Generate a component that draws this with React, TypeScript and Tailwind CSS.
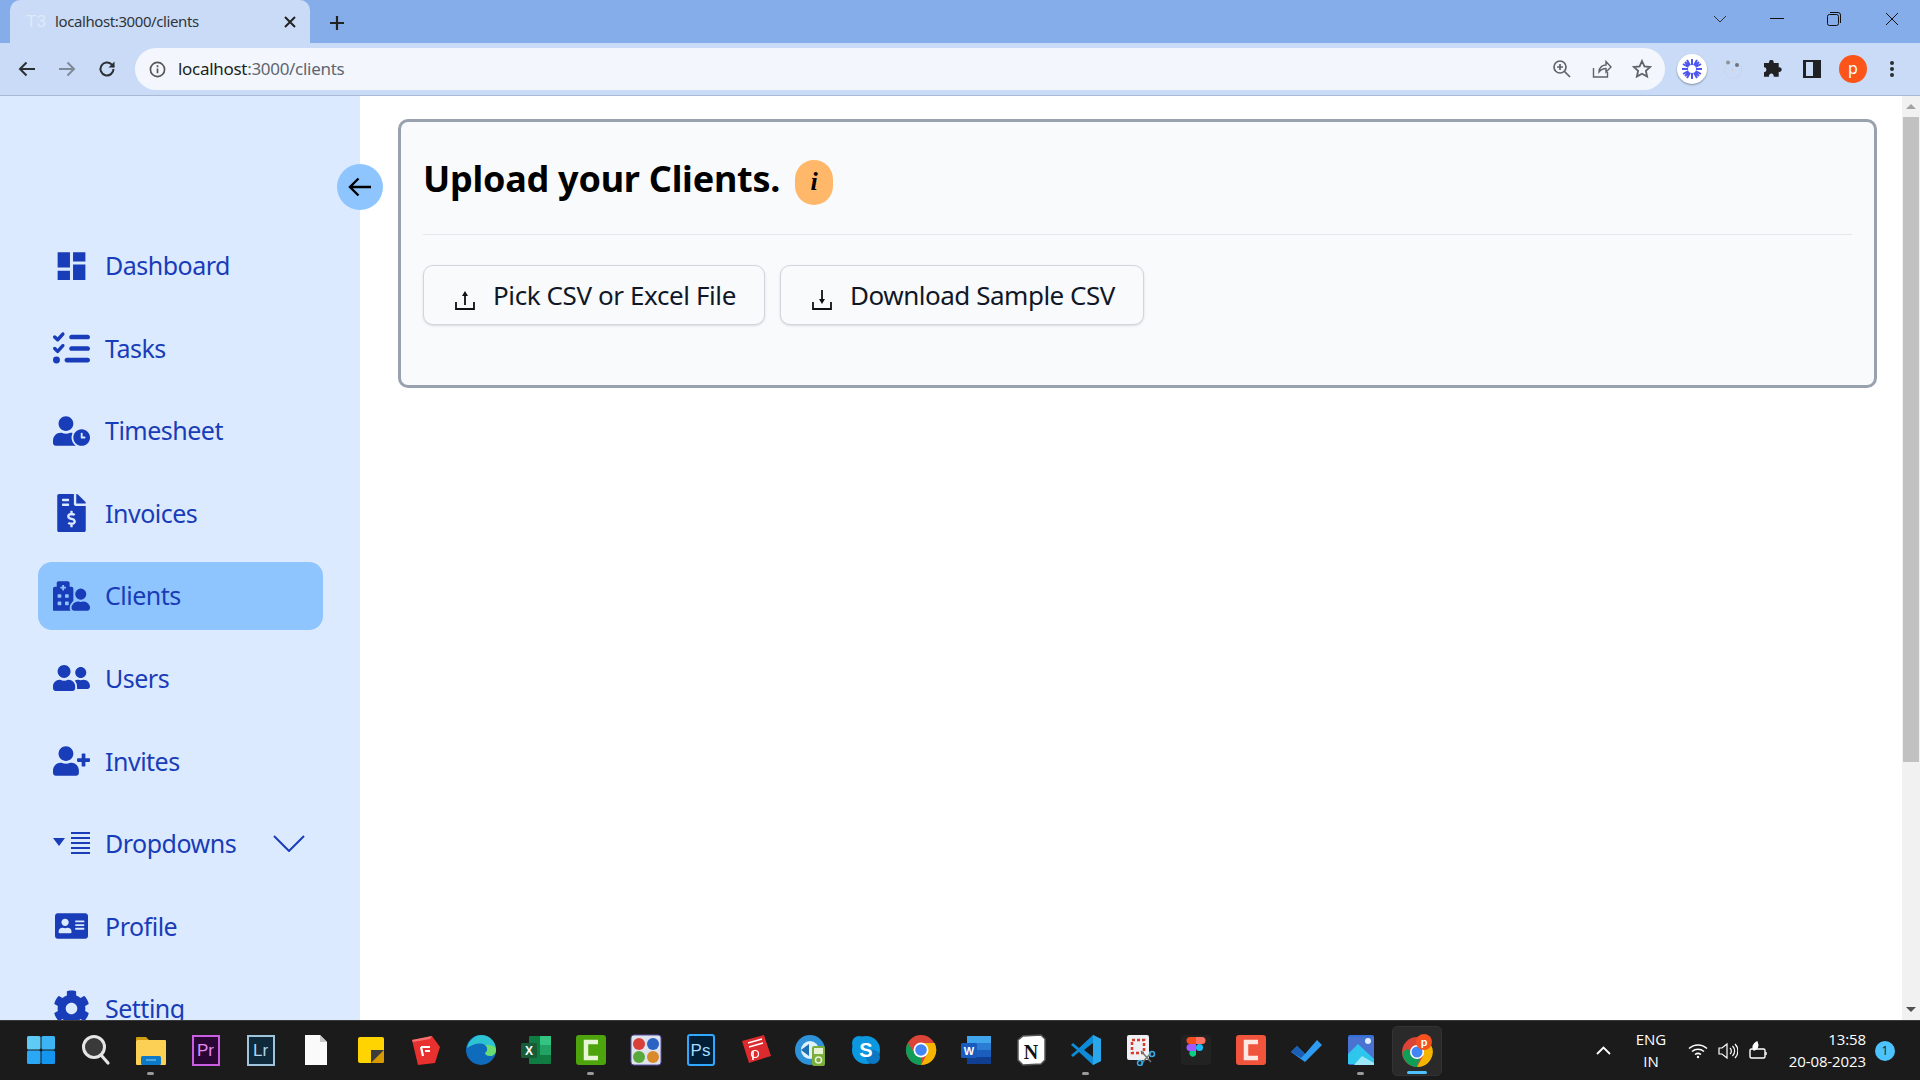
import React from "react";
import { FaListCheck } from "react-icons/fa6";
import { FaUserClock, FaFileInvoiceDollar, FaHospitalUser, FaUserFriends, FaUserPlus, FaAddressCard, FaCog } from "react-icons/fa";
import { MdDashboard } from "react-icons/md";

const Dd = () => (
  <svg viewBox="0 0 37 24" className="w-[37px] h-[24px]" fill="currentColor">
    <path d="M0 6h12L6 14z" />
    <path d="M18 0h19v2H18zM18 5h19v2H18zM18 10h19v2H18zM18 15h19v2H18zM18 20h19v2H18z" />
  </svg>
);

const nav: [string, React.ReactNode][] = [
  ["Dashboard", <MdDashboard className="w-[38px] h-[38px]" />],
  ["Tasks", <FaListCheck className="w-[37px] h-[37px]" />],
  ["Timesheet", <FaUserClock className="w-[37px] h-[30px]" />],
  ["Invoices", <FaFileInvoiceDollar className="w-[37px] h-[38px]" />],
  ["Clients", <FaHospitalUser className="w-[37px] h-[30px]" />],
  ["Users", <FaUserFriends className="w-[37px] h-[30px]" />],
  ["Invites", <FaUserPlus className="w-[37px] h-[30px]" />],
  ["Dropdowns", <Dd />],
  ["Profile", <FaAddressCard className="w-[33px] h-[30px]" />],
  ["Setting", <FaCog className="w-[37px] h-[37px]" />],
];

const S = ({ children, w = 32, h = 32 }: { children: React.ReactNode; w?: number; h?: number }) => (
  <svg width={w} height={h} viewBox="0 0 32 32">{children}</svg>
);

const apps: React.ReactNode[] = [
  <S><rect x="2" y="2" width="13.5" height="13.5" rx="1.5" fill="#5ecbf7" /><rect x="16.5" y="2" width="13.5" height="13.5" rx="1.5" fill="#3db5f5" /><rect x="2" y="16.5" width="13.5" height="13.5" rx="1.5" fill="#2ba8f5" /><rect x="16.5" y="16.5" width="13.5" height="13.5" rx="1.5" fill="#1496f0" /></S>,
  <S><circle cx="14" cy="13" r="10.5" fill="#3a3a3a" stroke="#e6e6e6" strokeWidth="3" /><path d="M21 21l7 8" stroke="#e6e6e6" strokeWidth="3.2" strokeLinecap="round" /></S>,
  <S><path d="M1 4a1 1 0 0 1 1-1h9l3 3h-13z" fill="#d09e10" /><rect x="1" y="6" width="30" height="25" rx="1" fill="#fcd055" /><rect x="6" y="22" width="20" height="9" rx="1.5" fill="#0c78c8" /><path d="M11 26h10" stroke="#7cc4ef" strokeWidth="1.2" /></S>,
  <div className="w-[28px] h-[31px] bg-[#2a0634] border-2 border-[#c95fe0] flex items-center justify-center text-[#e08cf2] text-[17px] leading-none font-['Liberation_Sans',sans-serif]">Pr</div>,
  <div className="w-[28px] h-[31px] bg-[#0f2a3a] border-2 border-[#9fc4dc] flex items-center justify-center text-[#b5d4e8] text-[17px] leading-none font-['Liberation_Sans',sans-serif]">Lr</div>,
  <S><path d="M5 1h15l7 7v23H5z" fill="#fafafa" /><path d="M20 1v7h7z" fill="#c8c8c8" /></S>,
  <S><rect x="3" y="3" width="26" height="26" rx="2" fill="#ffd400" /><path d="M16 29l13-13v11a2 2 0 0 1-2 2z" fill="#d99a00" /><path d="M16 29V16h13z" fill="#3c3c3c" /></S>,
  <S><path d="M2 6l20-4 8 11-5 16-17 2z" fill="#e8302e" /><path d="M2 6l20-4-2 3-17 3z" fill="#f67272" /><path d="M11 13h9M11 13l2 9M15 17h5" stroke="#fff" strokeWidth="2.2" fill="none" /></S>,
  <S><circle cx="16" cy="16" r="15" fill="#0f6cbd" /><path d="M2 14C4 5 11 1 16 1c8 0 15 6 15 15 0 3-2 6-6 6-3 0-5-1-5-3 3-1 3-6 0-8-5-3-12-1-18 3z" fill="#2ec3d3" /><path d="M31 16c0 2-1 5-5 6-3 0-5-1-6-3 3-2 3-6 0-8 4 0 11 0 11 5z" fill="#6bdc6e" /></S>,
  <S><rect x="9" y="2" width="22" height="28" rx="1" fill="#107c41" /><rect x="20" y="2" width="11" height="9" fill="#33c481" /><rect x="20" y="11" width="11" height="10" fill="#21a366" /><rect x="1" y="9" width="16" height="15" rx="1.5" fill="#185c37" /><text x="9" y="21" textAnchor="middle" fontSize="12" fontWeight="700" fill="#fff" fontFamily="Liberation Sans">X</text></S>,
  <S><rect x="1" y="1" width="30" height="30" rx="3" fill="#4da40d" /><path d="M23 8H11v16h12" fill="none" stroke="#e8f6d8" strokeWidth="4.5" /></S>,
  <S><rect x="1" y="1" width="30" height="30" rx="3" fill="#dfe3ee" stroke="#5a52a8" /><circle cx="9" cy="10" r="6" fill="#d8413a" /><circle cx="23" cy="10" r="6" fill="#2b63c4" /><circle cx="9" cy="23" r="6" fill="#59a83b" /><circle cx="23" cy="23" r="6" fill="#d98a2b" /></S>,
  <div className="w-[28px] h-[32px] bg-[#001e36] border-2 border-[#31a8ff] rounded-[3px] flex items-center justify-center text-[17px] leading-none font-['Liberation_Sans',sans-serif]"><span className="text-[#a5dcff]">Ps</span></div>,
  <S><path d="M2 7l22-6 7 21-22 7z" fill="#dc2a2e" /><path d="M8 9l14-4M9 13l14-4M13 17v9" stroke="#fff" strokeWidth="1.6" /><circle cx="15" cy="20" r="3.5" fill="none" stroke="#fff" strokeWidth="1.2" /></S>,
  <S><circle cx="15" cy="16" r="15" fill="#2e92d8" /><circle cx="15" cy="16" r="9" fill="#dff1fb" /><path d="M6 16l8-6v12z" fill="#1d6fb0" /><rect x="17" y="12" width="13" height="20" rx="2" fill="#7cae3e" /><rect x="19" y="14" width="9" height="6" fill="#e8f2d4" /><circle cx="23.5" cy="26" r="3" fill="none" stroke="#e8f2d4" strokeWidth="1.5" /></S>,
  <S><circle cx="16" cy="16" r="14" fill="#0b98e0" /><circle cx="9" cy="9" r="7" fill="#0b98e0" /><circle cx="23" cy="23" r="7" fill="#0b78c4" /><text x="16" y="23" textAnchor="middle" fontSize="20" fontWeight="700" fill="#fff" fontFamily="Liberation Sans">S</text></S>,
  <S><circle cx="16" cy="16" r="15" fill="#db4437" /><path d="M16 16L3 23.5A15 15 0 0 0 16 31z" fill="#0f9d58" /><path d="M3 23.5A15 15 0 0 1 2.9 8.7L10 20z" fill="#0f9d58" /><path d="M16 9h13.6A15 15 0 0 1 16 31l6-11z" fill="#f4b400" /><circle cx="16" cy="16" r="7.5" fill="#fff" /><circle cx="16" cy="16" r="5.8" fill="#4285f4" /></S>,
  <S><rect x="7" y="2" width="24" height="28" rx="1" fill="#1b5ebe" /><rect x="7" y="2" width="24" height="7" fill="#41a5ee" /><rect x="7" y="9" width="24" height="7" fill="#2b7cd3" /><rect x="7" y="23" width="24" height="7" fill="#103f91" /><rect x="1" y="9" width="16" height="15" rx="1.5" fill="#185abd" /><text x="9" y="21" textAnchor="middle" fontSize="11" fontWeight="700" fill="#fff" fontFamily="Liberation Sans">W</text></S>,
  <S><path d="M3 6l5-4 18-1 4 4v21l-4 4-18 1-5-5z" fill="#fff" stroke="#555" strokeWidth="1.5" /><text x="16" y="25" textAnchor="middle" fontSize="20" fontWeight="700" fill="#111" fontFamily="Liberation Serif">N</text></S>,
  <S><path d="M23 1l8 4v22l-8 4L9 18l-6 5-2-2 6-5-6-5 2-2 6 5z" fill="#0e8bd6" /><path d="M23 9v14l-9-7z" fill="#1a1a1a" /><path d="M23 1l8 4v22l-8 4z" fill="#2aa6ea" /></S>,
  <S><rect x="2" y="1" width="22" height="25" rx="2" fill="#eef0f3" /><path d="M7 6h12v13H7z" fill="none" stroke="#d83b2d" strokeWidth="2.5" strokeDasharray="3 2" /><path d="M16 17l10 11M26 19L16 30" stroke="#777" strokeWidth="1.5" /><circle cx="27" cy="20" r="2.5" fill="none" stroke="#3ba9e6" strokeWidth="1.5" /><circle cx="15" cy="29" r="2.5" fill="none" stroke="#3ba9e6" strokeWidth="1.5" /></S>,
  <S><rect x="1" y="1" width="30" height="30" rx="3" fill="#222" /><path d="M10 3h6v7h-6a3.5 3.5 0 0 1 0-7z" fill="#f24e1e" /><path d="M16 3h6a3.5 3.5 0 0 1 0 7h-6z" fill="#ff7262" /><path d="M10 10h6v7h-6a3.5 3.5 0 0 1 0-7z" fill="#a259ff" /><circle cx="19.5" cy="13.5" r="3.5" fill="#1abcfe" /><path d="M10 17h6v3.5a3.5 3.5 0 1 1-6-3.5z" fill="#0acf83" /></S>,
  <S><rect x="1" y="1" width="30" height="30" rx="3" fill="#f1543c" /><path d="M23 8H11v16h12" fill="none" stroke="#fde8e3" strokeWidth="4.5" /></S>,
  <S><path d="M1 18l6-6 8 8L27 6l5 5-17 17z" fill="#2f9bf0" /><path d="M1 18l6-6 8 8-4 4z" fill="#1a5fb4" /></S>,
  <S><rect x="3" y="1" width="26" height="30" rx="2" fill="#3270d8" /><path d="M3 3h26v27H3z" fill="#4a72d0" /><path d="M3 30V20l10-10 16 15v5z" fill="#2ec6ec" /><path d="M9 31l8-9 12 7v2z" fill="#9be8f7" /><circle cx="23" cy="7" r="3" fill="#dfeeff" /></S>,
];

export default function App() {
  return (
    <div className="h-screen w-full flex flex-col overflow-hidden bg-white font-['Noto_Sans',sans-serif]">
      {/* tab strip */}
      <div className="h-[43px] bg-[#84ade9] flex items-end shrink-0 pl-[10px] relative">
        <div className="w-[300px] h-[43px] bg-[#c9dbf6] rounded-t-[10px] flex items-center pl-[16px] pr-[13px] text-[15px] text-[#30343a]">
          <span className="w-[29px] text-[#dfe9f8] text-[17px] font-['Liberation_Sans',sans-serif]">T3</span>
          <span className="flex-1 tracking-[-0.4px]">localhost:3000/clients</span>
          <svg width="14" height="14" viewBox="0 0 14 14" stroke="#222" strokeWidth="2"><path d="M2 2l10 10M12 2L2 12" /></svg>
        </div>
        <svg className="ml-[19px] mb-[12px]" width="16" height="16" viewBox="0 0 16 16" stroke="#222" strokeWidth="2.2"><path d="M8 1v14M1 8h14" /></svg>
        <div className="flex-1" />
        <div className="flex items-center h-[43px] pb-[6px]">
          <svg className="mr-[43px]" width="14" height="8" viewBox="0 0 14 8" fill="none" stroke="#333" strokeWidth="1"><path d="M1 1l6 6 6-6" /></svg>
          <div className="w-[14px] h-px bg-[#111] mr-[43px]" />
          <svg className="mr-[44px]" width="14" height="14" viewBox="0 0 14 14" fill="none" stroke="#111" strokeWidth="1"><rect x="0.5" y="2.5" width="11" height="11" rx="2" /><path d="M3 .5h8a2.5 2.5 0 0 1 2.5 2.5v8" /></svg>
          <svg className="mr-[21px]" width="14" height="14" viewBox="0 0 14 14" stroke="#111" strokeWidth="1"><path d="M1 1l12 12M13 1L1 13" /></svg>
        </div>
      </div>
      {/* toolbar */}
      <div className="h-[53px] bg-[#c9dbf6] border-b border-[#a8b9d6] flex items-start shrink-0 pt-[5px]">
        <div className="w-[135px] h-[42px] flex items-center pl-[18px] gap-[22px] shrink-0">
          <svg width="18" height="16" viewBox="0 0 18 16" fill="none" stroke="#2b2f33" strokeWidth="2"><path d="M17 8H2M8.5 1.5L2 8l6.5 6.5" /></svg>
          <svg width="18" height="16" viewBox="0 0 18 16" fill="none" stroke="#7f8a99" strokeWidth="2"><path d="M1 8h15M9.5 1.5L16 8l-6.5 6.5" /></svg>
          <svg width="18" height="18" viewBox="0 0 18 18" fill="none" stroke="#2b2f33" strokeWidth="2"><path d="M15.5 9A6.5 6.5 0 1 1 13.6 4.4L16 7" /><path d="M16.5 1.5V7.5H10.5" fill="#2b2f33" stroke="none" /></svg>
        </div>
        <div className="w-[1530px] h-[42px] rounded-full bg-[#f3f7fd] flex items-center pl-[14px] pr-[13px] shrink-0">
          <svg width="17" height="17" viewBox="0 0 18 18" fill="none" stroke="#555" strokeWidth="1.8"><circle cx="9" cy="9" r="7.5" /><path d="M9 8v5M9 4.5v2" /></svg>
          <span className="ml-[12px] text-[17px] text-[#5f6670] tracking-[-0.3px]"><span className="text-[#1c1f22]">localhost</span>:3000/clients</span>
          <div className="flex-1" />
          <svg width="20" height="20" viewBox="0 0 20 20" fill="none" stroke="#5f6368" strokeWidth="1.7"><circle cx="8" cy="8" r="6" /><path d="M12.5 12.5L18 18M5 8h6M8 5v6" /></svg>
          <svg className="mx-[20px]" width="20" height="20" viewBox="0 0 20 20" fill="none" stroke="#5f6368" strokeWidth="1.4"><path d="M1.5 9v9h14v-5M7 13c0-5 4-7 7-7V2.5l5 5.5-5 5V9.500c-3 0-5 1-7 3.500z" /></svg>
          <svg width="20" height="20" viewBox="0 0 20 20" fill="none" stroke="#5f6368" strokeWidth="1.8"><path d="M10 2l2.400 5.400 5.800.6-4.300 3.900 1.200 5.700L10 14.700l-5.100 2.900 1.200-5.700L1.800 8l5.800-.6z" /></svg>
        </div>
        <div className="flex items-center h-[42px] pl-[12px]">
          <div className="w-[30px] h-[30px] rounded-full bg-white shadow-[0_1px_2px_rgba(0,0,0,0.35)] flex items-center justify-center mr-[16px]">
            <svg width="22" height="22" viewBox="0 0 22 22" stroke="#4f56f0" strokeWidth="2"><path d="M11 1v20M1 11h20M4 4l14 14M18 4L4 18M6 2l10 18M16 2L6 20M2 6l18 10M20 6L2 16" /><circle cx="11" cy="11" r="4" fill="#fff" stroke="none" /></svg>
          </div>
          <svg className="mr-[20px]" width="20" height="20" viewBox="0 0 20 20"><circle cx="10" cy="11" r="8.500" fill="none" stroke="#c5cfdc" strokeWidth="1" strokeDasharray="1.500 1.500" /><circle cx="5" cy="3.500" r="2" fill="#8e949c" /><circle cx="14" cy="6" r="2" fill="#6f757d" /><circle cx="9.500" cy="11" r="1" fill="#e0c9a0" /></svg>
          <svg className="mr-[21px]" width="19" height="18" viewBox="0 0 19 18" fill="#202124"><path d="M0 4h5.200a2.400 2.400 0 1 1 4.600 0H15v4.500a2.400 2.400 0 1 1 0 4.600V18H9.800a2.400 2.400 0 1 0-4.600 0H0v-4.500a2.400 2.400 0 1 0 0-5z" transform="translate(1 -1) scale(0.98)" /></svg>
          <div className="w-[18px] h-[18px] border-[2.500px] border-[#202124] border-l-[3px] border-r-[8px] mr-[18px]" />
          <div className="w-[28px] h-[28px] rounded-full bg-[#fc5419] text-white flex items-center justify-center text-[16px] leading-none pb-[2px] mr-[22px]">p</div>
          <svg width="6" height="18" viewBox="0 0 6 18" fill="#2a2d30"><circle cx="3" cy="3" r="2" /><circle cx="3" cy="9" r="2" /><circle cx="3" cy="15" r="2" /></svg>
        </div>
      </div>

      {/* page */}
      <div className="flex-1 min-h-0 flex relative overflow-hidden">
        <aside className="w-[360px] shrink-0 bg-blue-100 pl-[38px] pr-[37px] pt-[135.500px] flex flex-col gap-[14.600px] overflow-hidden">
          {nav.map(([label, icon]) => (
            <div key={label} className={`h-[68px] shrink-0 rounded-[14px] pl-[15px] pr-[18px] flex items-center text-blue-800 ${label === "Clients" ? "bg-blue-300" : ""}`}>
              <span className="w-[37px] flex items-center justify-center shrink-0">{icon}</span>
              <span className="ml-[15px] text-[25px] tracking-[-0.5px] leading-none flex-1">{label}</span>
              {label === "Dropdowns" && (
                <svg width="32" height="17" viewBox="0 0 32 17" fill="none" stroke="currentColor" strokeWidth="2"><path d="M1 1l15 15L31 1" /></svg>
              )}
            </div>
          ))}
        </aside>
        <div className="absolute left-[337px] top-[68px] w-[46px] h-[46px] rounded-full bg-blue-300 flex items-center justify-center">
          <svg width="24" height="20" viewBox="0 0 24 20" fill="none" stroke="#000" strokeWidth="2.400"><path d="M23 10H2M10.500 1.500L2 10l8.500 8.500" /></svg>
        </div>
        <main className="flex-1 min-w-0 pl-[38px] pr-[25px] pt-[23px]">
          <section className="h-[269px] rounded-[10px] border-[3px] border-gray-400 bg-gray-50 px-[22px]">
            <div className="h-[113px] border-b border-gray-200 flex items-center">
              <h1 className="text-[36px] tracking-[-0.25px] font-bold text-black leading-none mt-[2px]">Upload your Clients.</h1>
              <div className="ml-[15px] mt-[8px] w-[38px] h-[45px] rounded-full bg-orange-300 flex items-center justify-center italic font-bold text-[26px] leading-none text-black font-['Liberation_Serif',serif]">i</div>
            </div>
            <div className="flex gap-[15px] mt-[30px]">
              <button className="h-[60px] w-[342px] rounded-[10px] border border-gray-300 shadow-sm bg-gray-50 flex items-center pl-[30px] text-[26px] tracking-[-0.4px] text-gray-900">
                <svg className="mt-[8px]" width="22" height="22" viewBox="0 0 22 22" fill="none" stroke="#111" strokeWidth="1.800"><path d="M2 14v7h18v-7M11 17V6" /><path d="M8 8l3-5 3 5z" fill="#111" stroke="none" /></svg>
                <span className="ml-[17px]">Pick CSV or Excel File</span>
              </button>
              <button className="h-[60px] w-[364px] rounded-[10px] border border-gray-300 shadow-sm bg-gray-50 flex items-center pl-[30px] text-[26px] tracking-[-0.48px] text-gray-900">
                <svg className="mt-[8px]" width="22" height="22" viewBox="0 0 22 22" fill="none" stroke="#111" strokeWidth="1.800"><path d="M2 14v7h18v-7M11 2v10" /><path d="M8 11l3 5 3-5z" fill="#111" stroke="none" /></svg>
                <span className="ml-[17px]">Download Sample CSV</span>
              </button>
            </div>
          </section>
        </main>
        <div className="w-[18px] shrink-0 bg-[#f1f1f1] flex flex-col items-center">
          <div className="h-[21px] flex items-center"><div className="w-0 h-0 border-x-[5px] border-x-transparent border-b-[5px] border-b-[#a3a3a3]" /></div>
          <div className="w-[16px] h-[645px] bg-[#c1c1c1]" />
          <div className="flex-1" />
          <div className="h-[21px] flex items-center"><div className="w-0 h-0 border-x-[5px] border-x-transparent border-t-[5px] border-t-[#505050]" /></div>
        </div>
      </div>

      {/* taskbar */}
      <footer className="h-[60px] shrink-0 bg-[#1b1b1b] border-t border-[#3a3a3a] flex items-center pl-[13px] text-white">
        {apps.map((a, i) => (
          <div key={i} className="w-[55px] h-[50px] flex items-center justify-center relative pb-[1px]">
            {a}
            {[2, 10, 19, 24].includes(i) && <div className="absolute bottom-[1px] left-[24px] w-[7px] h-[3px] rounded-full bg-[#9a9a9a]" />}
          </div>
        ))}
        <div className="w-[50px] h-[50px] rounded-[5px] bg-[#2a2a2a] border border-[#333] flex items-center justify-center relative ml-[4px]">
          <svg width="32" height="34" viewBox="0 0 32 34"><circle cx="16" cy="18" r="15" fill="#db4437" /><path d="M1.500 18A15 15 0 0 0 16 33l4-12-14-6z" fill="#0f9d58" /><path d="M16 11h14A15 15 0 0 1 16 33l6-11z" fill="#f4b400" /><circle cx="16" cy="18" r="7" fill="#fff" /><circle cx="16" cy="18" r="5.500" fill="#4285f4" /><circle cx="23" cy="8" r="8" fill="#f4511e" /><text x="23" y="12" textAnchor="middle" fontSize="11" fontWeight="700" fill="#fff" fontFamily="Liberation Sans">p</text></svg>
          <div className="absolute bottom-[1px] left-[14px] w-[20px] h-[3px] rounded-full bg-[#4cc2ff]" />
        </div>
        <div className="flex-1" />
        <svg width="15" height="9" viewBox="0 0 15 9" fill="none" stroke="#fff" strokeWidth="1.800"><path d="M1 8l6.500-6.500L14 8" /></svg>
        <div className="ml-[20px] w-[40px] text-center text-[15px] leading-[22px] font-['Open_Sans',sans-serif] -mt-[2px]">ENG<br />IN</div>
        <svg className="ml-[17px]" width="20" height="16" viewBox="0 0 20 16" fill="none" stroke="#fff" strokeWidth="1.500"><path d="M1 5.500a13 13 0 0 1 18 0M4 8.500a9 9 0 0 1 12 0M7 11.500a5 5 0 0 1 6 0" /><circle cx="10" cy="14" r="1.200" fill="#fff" stroke="none" /></svg>
        <svg className="ml-[10px]" width="20" height="18" viewBox="0 0 20 18" fill="none" stroke="#fff" strokeWidth="1.200"><path d="M1 6h3l5-4v14l-5-4H1z" /><path d="M12 6a4 4 0 0 1 0 6M14.500 4a7 7 0 0 1 0 10M17 2a10 10 0 0 1 0 14" /></svg>
        <svg className="ml-[10px]" width="20" height="20" viewBox="0 0 20 20" fill="none" stroke="#fff" strokeWidth="1.400"><rect x="2" y="8" width="15" height="9" rx="1.500" /><path d="M18 11v3" /><path d="M9 1c-4 2-5 6-3 8 3-1 5-4 3-8z" fill="#fff" /></svg>
        <div className="ml-[10px] w-[88px] text-right text-[15px] leading-[22px] font-['Open_Sans',sans-serif] tracking-[-0.1px] -mt-[2px]">13:58<br />20-08-2023</div>
        <div className="ml-[9px] mr-[25px] w-[20px] h-[20px] rounded-full bg-[#4cc2ff] text-[#0c2533] text-[12px] flex items-center justify-center font-['Open_Sans',sans-serif]">1</div>
      </footer>
    </div>
  );
}
